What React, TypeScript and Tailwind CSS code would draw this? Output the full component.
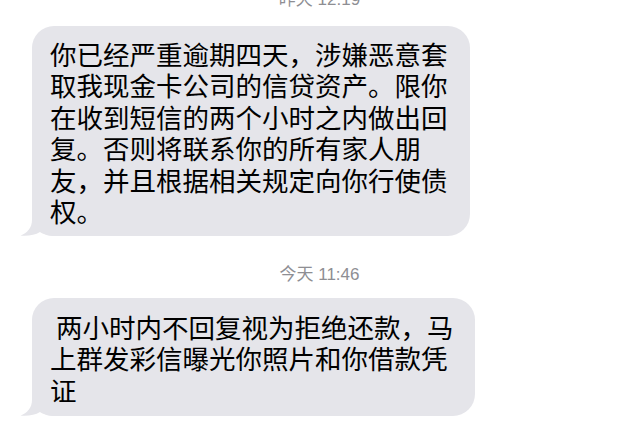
import React from "react";

const font = { fontFamily: '"Noto Sans CJK SC", "Noto Sans", sans-serif' };
const tsFont = { fontFamily: '"Liberation Sans", "Noto Sans CJK SC", sans-serif' };

function Tail() {
  return (
    <svg
      className="absolute left-[-12px] bottom-0"
      width="40"
      height="30"
      viewBox="0 0 40 30"
    >
      <path
        d="M12 0 L12 14 C12 22 7 27 0.5 29.6 C8 30.4 15 29 20 26 C24 28.5 28 30 36 30 L40 30 L40 0 Z"
        fill="#e5e5ea"
      />
    </svg>
  );
}

export default function App() {
  return (
    <div className="w-[639px] h-[442px] bg-white overflow-hidden flex flex-col">
      <div
        className="mt-[-10px] h-[20px] text-center text-[17px] leading-[20px] text-[#8e8e93]"
        style={tsFont}
      >
        昨天 12:19
      </div>
      <div className="mt-[16px]">
        <div className="relative ml-[32px] w-[438px] pt-[11.5px] pb-[9.5px] rounded-[22px] bg-[#e5e5ea] pl-[18px]">
          <Tail />
          <div className="relative w-[402px] text-[26.5px] leading-[31.5px] text-black" style={font}>
            你已经严重逾期四天，涉嫌恶意套取我现金卡公司的信贷资产。限你在收到短信的两个小时之内做出回复。否则将联系你的所有家人朋友，并且根据相关规定向你行使债权。
          </div>
        </div>
      </div>
      <div
        className="mt-[29px] h-[20px] text-center text-[17px] leading-[20px] text-[#8e8e93]"
        style={tsFont}
      >
        今天 11:46
      </div>
      <div className="mt-[13px]">
        <div className="relative ml-[32px] w-[443px] pt-[12.5px] pb-[11px] rounded-[22px] bg-[#e5e5ea] pl-[18px]">
          <Tail />
          <div
            className="relative w-[410px] text-[26.5px] leading-[31.5px] text-black whitespace-pre-wrap"
            style={font}
          >
            {" 两小时内不回复视为拒绝还款，马上群发彩信曝光你照片和你借款凭证"}
          </div>
        </div>
      </div>
    </div>
  );
}
